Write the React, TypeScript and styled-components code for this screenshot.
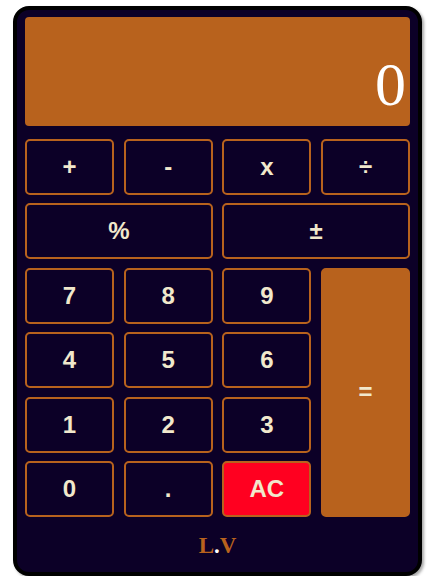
import React from "react";
import styled, { createGlobalStyle } from "styled-components";

const Global = createGlobalStyle`
  html, body { margin: 0; padding: 0; background: #ffffff; }
  #root { display: block; }
`;

const Page = styled.div`
  padding: 6px 0 0 13px;
`;

const Calculator = styled.div`
  box-sizing: border-box;
  width: 409px;
  height: 570px;
  background: #0c0027;
  border: 4px solid #000000;
  border-radius: 16px;
  box-shadow: 2px 2px 3px rgba(0, 0, 0, 0.35);
  padding: 7px 8px 0 8px;
  display: flex;
  flex-direction: column;
`;

const Display = styled.div`
  height: 109px;
  background: #b8621d;
  border-radius: 4px;
  display: flex;
  align-items: flex-end;
  justify-content: flex-end;
  padding: 0 4px 11px 0;
  box-sizing: border-box;
  color: #ffffff;
  font-family: "Liberation Serif", "Times New Roman", serif;
  font-size: 62px;
  line-height: 1;
`;

const Keys = styled.div`
  margin-top: 13px;
  display: grid;
  grid-template-columns: repeat(4, 1fr);
  grid-template-rows: repeat(6, 56px);
  column-gap: 9.6px;
  row-gap: 8.4px;
`;

type KeyProps = { $variant?: "normal" | "clear" | "equals"; $span?: number; $rows?: number };

const Key = styled.button<KeyProps>`
  box-sizing: border-box;
  margin: 0;
  padding: 0;
  border-radius: 5px;
  border: 2px solid #b8621d;
  background: ${(p) =>
    p.$variant === "clear" ? "#ff0020" : p.$variant === "equals" ? "#b8621d" : "#0c0027"};
  color: #f1e8cc;
  font-family: "Liberation Sans", Arial, sans-serif;
  font-weight: 700;
  font-size: 24px;
  display: flex;
  align-items: center;
  justify-content: center;
  grid-column: span ${(p) => p.$span ?? 1};
  grid-row: span ${(p) => p.$rows ?? 1};
`;

const Footer = styled.div`
  flex: 1;
  display: flex;
  align-items: center;
  justify-content: center;
  padding-top: 3px;
  font-family: "Liberation Serif", "Times New Roman", serif;
  font-weight: 700;
  font-size: 23px;
  color: #b8621d;
`;

const Dot = styled.span`
  color: #ffffff;
`;

export default function App() {
  return (
    <>
      <Global />
      <Page>
        <Calculator>
          <Display>0</Display>
          <Keys>
            <Key>+</Key>
            <Key>-</Key>
            <Key>x</Key>
            <Key>÷</Key>
            <Key $span={2}>%</Key>
            <Key $span={2}>±</Key>
            <Key>7</Key>
            <Key>8</Key>
            <Key>9</Key>
            <Key $variant="equals" $rows={4}>=</Key>
            <Key>4</Key>
            <Key>5</Key>
            <Key>6</Key>
            <Key>1</Key>
            <Key>2</Key>
            <Key>3</Key>
            <Key>0</Key>
            <Key>.</Key>
            <Key $variant="clear">AC</Key>
          </Keys>
          <Footer>
            L<Dot>.</Dot>V
          </Footer>
        </Calculator>
      </Page>
    </>
  );
}
